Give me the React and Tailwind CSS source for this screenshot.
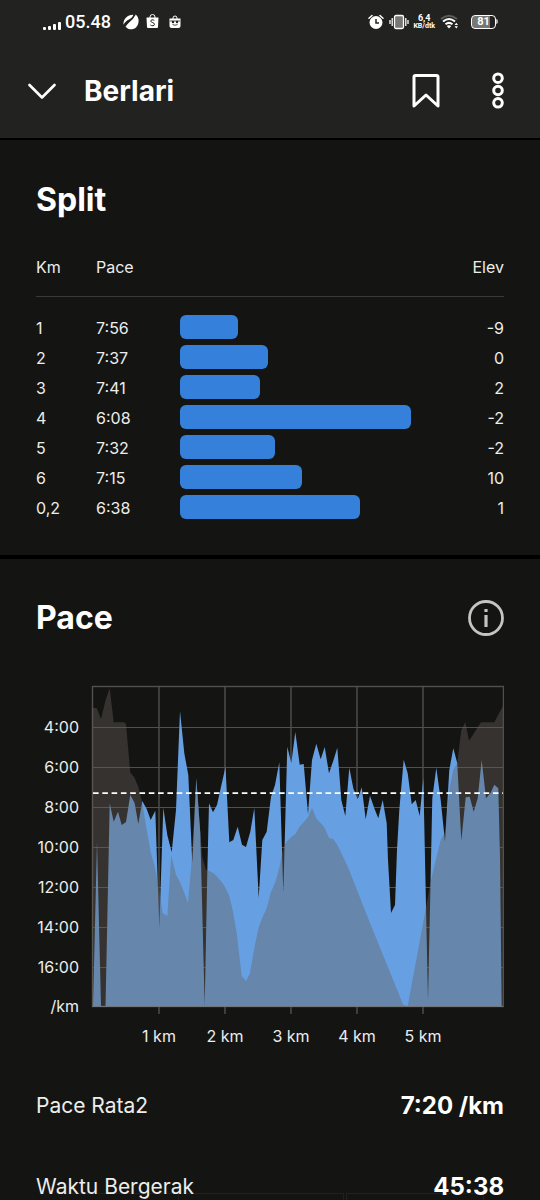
import React from 'react'

const splits = [
  { km: '1', pace: '7:56', elev: '-9', bar: 22 },
  { km: '2', pace: '7:37', elev: '0', bar: 33.3 },
  { km: '3', pace: '7:41', elev: '2', bar: 30.4 },
  { km: '4', pace: '6:08', elev: '-2', bar: 87.5 },
  { km: '5', pace: '7:32', elev: '-2', bar: 35.8 },
  { km: '6', pace: '7:15', elev: '10', bar: 46.2 },
  { km: '0,2', pace: '6:38', elev: '1', bar: 68.2 },
]

const stats = [
  { label: 'Pace Rata2', value: '7:20 /km' },
  { label: 'Waktu Bergerak', value: '45:38' },
]

// y axis: label and offset from the top of the plot
const paceTicks = [
  ['4:00', 41],
  ['6:00', 81],
  ['8:00', 121],
  ['10:00', 161],
  ['12:00', 201],
  ['14:00', 241],
  ['16:00', 281],
  ['/km', 320],
]

const kmTicks = [
  ['1 km', 67],
  ['2 km', 133],
  ['3 km', 199],
  ['4 km', 265],
  ['5 km', 331],
]

const paceArea =
  '1,320 5,155 9,320 13.5,320 17.7,117 21.7,135.7 26,125.7 29.7,139 34,136 38.3,108.7 42.7,117.3 46.3,138 50.3,115 54.7,123 58.7,134 63.3,124.7 67.3,242 71.3,121.7 75.3,149 79.7,166.3 84,124 88,25 92.3,67.3 96.3,89 100.3,177 104.3,92.3 108.3,147 112.7,319 115.3,186 117,117.3 121,126.3 125,119 128.7,102.3 133.5,81 137.3,156.3 141.3,154 145.7,140.7 150,158.7 154,161 158.3,145.7 162.3,122 166.7,212 170.3,154 174.7,145.7 179,110.7 183,99 187.3,76.3 191.3,207 195.3,60.7 199.3,77.3 203.3,46 207.7,78.7 211.7,78 216,128 220,74 224.3,57.7 228.7,73.3 232.7,61 237,87.3 241.3,74.7 245.3,61.7 249.3,114 253.3,130 257.3,81.7 261.3,102.3 265.7,113.3 269.7,101.3 273.7,133.3 278,109.7 282.3,122.3 286.3,132.3 290.7,114 294.7,137.3 296,174 299,227 303,219 305,164 307.3,124 311.7,73.7 315.7,87.3 319.7,118.3 323.7,114 327.7,130 331.3,92.3 336,314 339,174 340.3,112.3 344.3,81.7 348.7,114 353,155.7 357.3,84 361.3,62.3 365.3,77.3 369.3,154.7 373.7,111.3 377.7,110.7 381.7,125.7 385.7,112.3 389.7,74 394,112.3 398.7,106.7 402.3,98.7 406.3,102.3 408,170 409.7,320'

const elevationArea =
  '0,320 0,22 4.7,22 9,33 13.7,14 17.7,2.3 21.7,36.3 32,36.3 34,38.3 38.3,86.7 42.3,91.3 46.3,100.7 50.3,117 54.7,144 58.7,166 63,182 67,204 70.7,227 75.3,230 79.3,169 84,189 88,196 92.3,207 96,217 99.3,179 104.3,92.3 108.3,147 110.3,171 114,184 117,185 121.3,187 125.3,191 129.7,196 133,201 137,209 140.7,224 144.7,247 149.7,290 154,295 158,287 162.3,262 166.7,241 170.7,231 174.7,222 179,206 183,197 187.3,182 191.3,161 195.3,155 199.3,151 203.3,148 208,140 212,136 216,131 220,122 224.7,133 228.7,137 232.7,142 237,152 241.3,153 245.3,159 249.3,167 256.3,182 265,204 278,237 311.3,319 315.7,320 331.3,236 339,194 344.3,172 348.7,154 353,146 355.3,124 357.3,104 361.3,84 365.3,77 369.3,44 373.3,36.3 377,54.7 381.3,48.3 389,36.3 402.3,36.3 407,27.3 411,20 411,320'

function StatusBar() {
  return (
    <div className="flex h-[43px] items-center justify-between pl-[43px] pr-[42px] font-[Roboto,sans-serif] text-white">
      <div className="flex items-center">
        <svg width="18" height="10" viewBox="0 0 18 10" fill="currentColor" className="mt-2">
          <rect x="0" y="6" width="3" height="3" rx="1" />
          <rect x="5" y="5" width="3" height="4" rx="1" />
          <rect x="10" y="3" width="3" height="6" rx="1" />
          <rect x="15" y="1" width="3" height="8" rx="1" />
        </svg>
        <span className="ml-1 text-lg font-medium leading-none">05.48</span>
        <svg width="16" height="16" viewBox="0 0 16 16" fill="currentColor" className="ml-3">
          <path d="M12.6 0.6C16.4 3 16.6 9.6 13.2 13.2C10.4 16.2 5 16 3 13C7 12.5 10.6 9.6 11.3 6C11.7 4 12 2 12.6 0.6Z" />
          <path d="M2.4 12.4L12.2 1.4L14 5L12 12L6 14Z" />
          <path d="M0.5 10.8C0 5.6 4 0.8 10.3 0.8C9.6 5.2 3 5.4 0.5 10.8Z" />
          <path d="M2.2 11.8C3.6 7.4 9.6 7.4 11.4 1.2" fill="none" stroke="#222220" strokeWidth="1.2" />
        </svg>
        <svg width="13" height="15" viewBox="0 0 13 15" className="ml-[7px]">
          <path d="M4 4V3A2.5 2.5 0 0 1 9 3V4" fill="none" stroke="currentColor" />
          <path d="M0.5 3.5H12.5L12 13Q12 14 11 14H2Q1 14 1 13Z" fill="currentColor" />
          <path d="M8.3 6.4C7 5.4 4.7 5.7 4.8 7.2C4.9 8.9 8.5 8.3 8.5 10.3C8.5 12 5.9 12.2 4.4 11" fill="none" stroke="#222220" />
        </svg>
        <svg width="12" height="14" viewBox="0 0 12 14" className="ml-[10px]">
          <path d="M4 4V3A2 2 0 0 1 8 3V4" fill="none" stroke="currentColor" />
          <path d="M0.5 3.5H11.5V11Q11.5 13 9.5 13H2.5Q0.5 13 0.5 11Z" fill="currentColor" />
          <circle cx="4" cy="7" r="1.2" fill="#222220" />
          <circle cx="8" cy="7" r="1.2" fill="#222220" />
          <path d="M1 6H11M3.5 9.5Q6 11 8.5 9.5" fill="none" stroke="#222220" strokeWidth="0.8" />
        </svg>
      </div>

      <div className="flex items-center">
        <svg width="16" height="16" viewBox="0 0 16 16" fill="none">
          <circle cx="8" cy="8.5" r="6.5" fill="currentColor" />
          <path d="M1 4.2L4 1.5M15 4.2L12 1.5" stroke="currentColor" strokeWidth="1.5" strokeLinecap="round" />
          <path d="M8 5V9H11" stroke="#222220" strokeWidth="1.5" />
        </svg>
        <svg width="20" height="16" viewBox="0 0 20 16" fill="none" stroke="currentColor" className="ml-[5px]">
          <rect x="5.5" y="1.5" width="9" height="13" rx="1.5" fill="#777775" strokeWidth="1.3" />
          <path d="M3.2 4V12M16.8 4V12M1 6V10M19 6V10" strokeWidth="1.3" />
        </svg>
        <div className="ml-1 text-center font-bold">
          <div className="text-[9px] leading-[9px]">6,4</div>
          <div className="text-[7px] leading-[7px]">KB/dtk</div>
        </div>
        <svg width="20" height="16" viewBox="0 0 20 16" fill="none" stroke="currentColor" className="ml-[5px]">
          <path d="M1 5Q9 -1.5 17 5" stroke="#5c5c5a" strokeWidth="2" />
          <path d="M3 7.5Q9 2.5 15 7.5" strokeWidth="2" />
          <path d="M5.5 10.3Q9 7.5 12.5 10.3" strokeWidth="2" />
          <path d="M6.7 12Q9 10.5 11.3 12L9 14.5Z" fill="currentColor" stroke="none" />
          <path d="M14.5 11L16.3 8.7L18 11ZM14.5 12.3L16.3 14.6L18 12.3Z" fill="currentColor" stroke="none" />
        </svg>
        <div className="ml-[11px] flex items-center">
          <div className="flex h-[14px] w-[25px] items-center justify-center rounded-[4px] border border-white bg-linear-to-r from-[#777775] from-80% to-[#222220] to-80% text-[11px] font-bold leading-none">
            81
          </div>
          <div className="h-[5px] w-[2px] rounded-r bg-[#b0b0ae]" />
        </div>
      </div>
    </div>
  )
}

function Header() {
  return (
    <header className="border-b-2 border-black bg-[#222220]">
      <StatusBar />
      <div className="flex h-[95px] items-center pl-7 pr-9">
        <button type="button" aria-label="Tutup">
          <svg width="28" height="18" viewBox="0 0 28 18" fill="none" stroke="currentColor" strokeWidth="2.6" strokeLinecap="round" strokeLinejoin="round">
            <path d="M1.5 3L14 15.5L26.5 3" />
          </svg>
        </button>
        <h1 className="ml-7 flex-1 text-[28px] font-bold leading-9">Berlari</h1>
        <button type="button" aria-label="Simpan">
          <svg width="28" height="34" viewBox="0 0 28 34" fill="none" stroke="currentColor" strokeWidth="3" strokeLinejoin="round">
            <path d="M3.5 1.5H24.5Q26 1.5 26 3V32L14 21L2 32V3Q2 1.5 3.5 1.5Z" />
          </svg>
        </button>
        <button type="button" aria-label="Menu lainnya" className="ml-[52px]">
          <svg width="12" height="38" viewBox="0 0 12 38" fill="none" stroke="currentColor" strokeWidth="3">
            <circle cx="6" cy="6.2" r="4.3" />
            <circle cx="6" cy="18.5" r="4.3" />
            <circle cx="6" cy="30.8" r="4.3" />
          </svg>
        </button>
      </div>
    </header>
  )
}

function SplitTable() {
  return (
    <section className="border-b-4 border-black px-9 pb-[33px] pt-10">
      <h2 className="text-[32px] font-bold leading-10">Split</h2>
      <table className="mt-[18px] w-full table-fixed text-base text-[#ededeb]">
        <colgroup>
          <col className="w-[60px]" />
          <col className="w-[84px]" />
          <col />
          <col className="w-[60px]" />
        </colgroup>
        <thead>
          <tr className="h-[58px] border-b border-[#3a3b39] text-left">
            <th className="font-normal">Km</th>
            <th className="font-normal">Pace</th>
            <td />
            <th className="text-right font-normal">Elev</th>
          </tr>
        </thead>
        <tbody>
          <tr className="h-4">
            <td colSpan={4} />
          </tr>
          {splits.map((split) => (
            <tr key={split.km} className="h-[30px]">
              <td className="p-0 pt-px">{split.km}</td>
              <td className="p-0 pt-px">{split.pace}</td>
              <td className="p-0">
                <div className="h-6 rounded-md bg-[#3580db]" style={{ width: `${split.bar}%` }} />
              </td>
              <td className="p-0 pt-px text-right">{split.elev}</td>
            </tr>
          ))}
        </tbody>
      </table>
    </section>
  )
}

function PaceChart() {
  return (
    <svg viewBox="0 0 468 370" className="mt-[42px] block w-full" role="img" aria-label="Pace">
      <g transform="translate(56 6)">
        <g stroke="#50504e">
          {paceTicks.slice(0, -1).map(([label, y]) => (
            <line key={label} x1="0" x2="411" y1={y + 0.5} y2={y + 0.5} />
          ))}
          {kmTicks.map(([label, x]) => (
            <line key={label} x1={x} x2={x} y1="0" y2="328" strokeWidth="1.4" />
          ))}
          <rect x="0.5" y="0.5" width="411" height="320" fill="none" strokeWidth="1.4" />
        </g>
        <polygon points={paceArea} fill="#66a0e3" />
        <polygon points={elevationArea} fill="#666059" fillOpacity="0.4" />
        <line x1="0" x2="411" y1="320.5" y2="320.5" stroke="#71767b" />
        <line x1="1" x2="411" y1="107.2" y2="107.2" stroke="#fff" strokeWidth="1.7" strokeDasharray="5.6 3.7" />
        <g fill="#ededeb" fontSize="16">
          {paceTicks.map(([label, y]) => (
            <text key={label} x="-13" y={y + 6} textAnchor="end">
              {label}
            </text>
          ))}
          {kmTicks.map(([label, x]) => (
            <text key={label} x={x} y="356" textAnchor="middle">
              {label}
            </text>
          ))}
        </g>
      </g>
    </svg>
  )
}

function PaceSection() {
  return (
    <section className="px-9 pt-[39px]">
      <div className="flex items-center justify-between">
        <h2 className="text-[32px] font-bold leading-10">Pace</h2>
        <button type="button" aria-label="Info" className="text-[#c4c4c2]">
          <svg width="36" height="36" viewBox="0 0 36 36" fill="none" stroke="currentColor">
            <circle cx="18" cy="18" r="16.5" strokeWidth="2.8" />
            <path d="M18 15V27M18 9V12" strokeWidth="3.2" />
          </svg>
        </button>
      </div>
      <PaceChart />
      <dl className="mt-[15px]">
        {stats.map((stat) => (
          <div key={stat.label} className="flex h-[81px] items-center justify-between">
            <dt className="text-[21px] text-[#ededeb]">{stat.label}</dt>
            <dd className="text-2xl font-bold">{stat.value}</dd>
          </div>
        ))}
      </dl>
    </section>
  )
}

export default function App() {
  return (
    <div className="min-h-screen bg-[#141513] font-[Inter,sans-serif] text-white">
      <Header />
      <main>
        <SplitTable />
        <PaceSection />
      </main>
      {/* top edge of the dock peeking in */}
      <div className="pointer-events-none fixed inset-x-0 bottom-0 flex h-[7px] gap-0.5 px-14 mix-blend-lighten" aria-hidden="true">
        <div className="w-[120px] border-t border-[#20201e]" />
        <div className="w-[166px] border border-b-0 border-[#20201e]" />
        <div className="flex-1 border border-b-0 border-[#20201e]" />
      </div>
    </div>
  )
}
